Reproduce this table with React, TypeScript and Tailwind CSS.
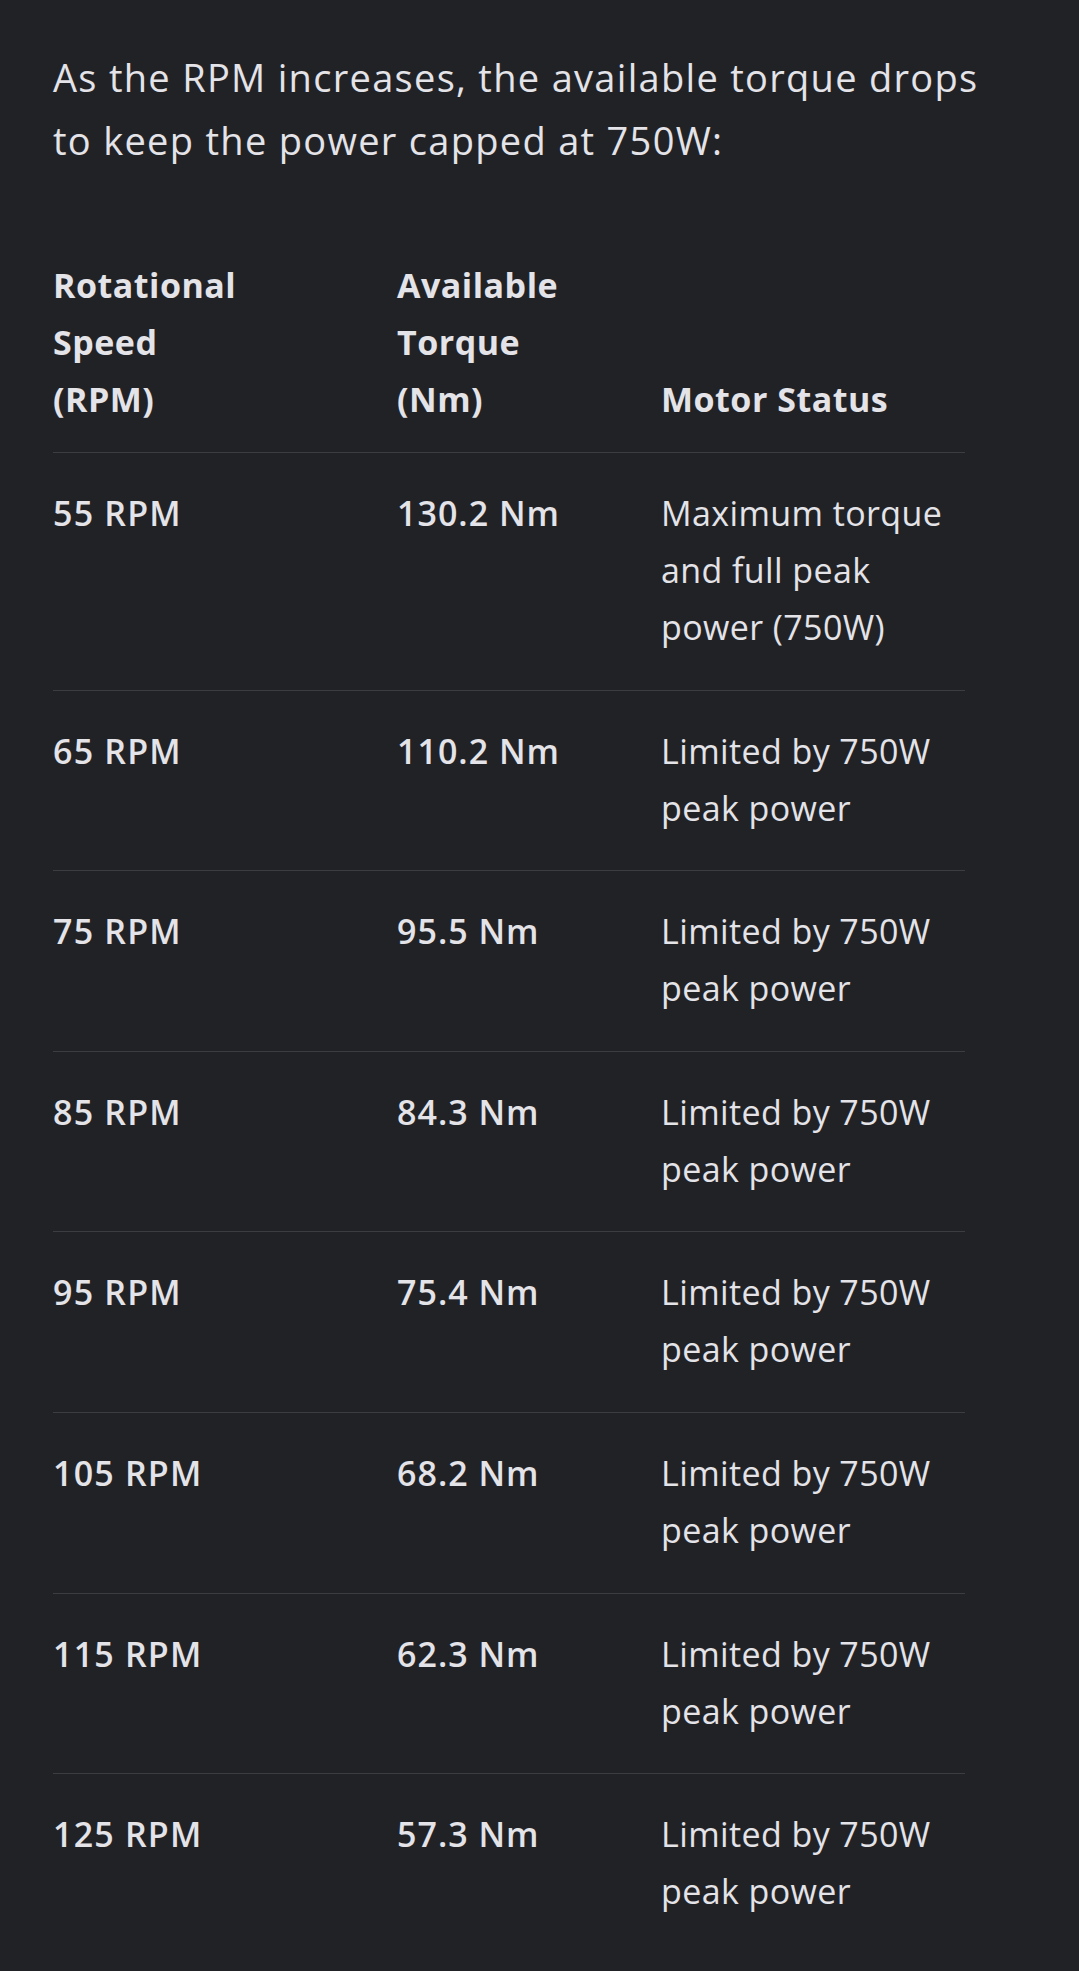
import React from "react";

const rows: { rpm: string; torque: string; status: string[] }[] = [
  { rpm: "55 RPM", torque: "130.2 Nm", status: ["Maximum torque", "and full peak", "power (750W)"] },
  { rpm: "65 RPM", torque: "110.2 Nm", status: ["Limited by 750W", "peak power"] },
  { rpm: "75 RPM", torque: "95.5 Nm", status: ["Limited by 750W", "peak power"] },
  { rpm: "85 RPM", torque: "84.3 Nm", status: ["Limited by 750W", "peak power"] },
  { rpm: "95 RPM", torque: "75.4 Nm", status: ["Limited by 750W", "peak power"] },
  { rpm: "105 RPM", torque: "68.2 Nm", status: ["Limited by 750W", "peak power"] },
  { rpm: "115 RPM", torque: "62.3 Nm", status: ["Limited by 750W", "peak power"] },
  { rpm: "125 RPM", torque: "57.3 Nm", status: ["Limited by 750W", "peak power"] },
];

function Lines({ lines }: { lines: string[] }) {
  return (
    <>
      {lines.map((l, i) => (
        <div key={i} className="whitespace-nowrap">
          {l}
        </div>
      ))}
    </>
  );
}

export default function App() {
  return (
    <div
      className="min-h-[1971px] w-full bg-[#212226] text-[#e3e3e8] pt-[46px] pl-[53px] pr-[40px]"
      style={{ fontFamily: "'Open Sans', Roboto, Arial, sans-serif" }}
    >
      <p className="text-[38px] leading-[63px] tracking-[1.3px]">
        As the RPM increases, the available torque drops
        <br />
        to keep the power capped at 750W:
      </p>

      <div className="mt-[85px] w-[912px]">
        <div className="grid grid-cols-[344px_264px_304px] items-end border-b border-[#3c3d42] pb-[24px] text-[34px] leading-[57px] font-bold tracking-[0.5px]">
          <div>
            <Lines lines={["Rotational", "Speed", "(RPM)"]} />
          </div>
          <div>
            <Lines lines={["Available", "Torque", "(Nm)"]} />
          </div>
          <div>
            <Lines lines={["Motor Status"]} />
          </div>
        </div>

        {rows.map((r, i) => (
          <div
            key={i}
            className={
              "grid grid-cols-[344px_264px_304px] items-start pt-[32px] pb-[33.6px] text-[34px] leading-[57px] " +
              (i < rows.length - 1 ? "border-b border-[#3c3d42]" : "")
            }
          >
            <div className="font-semibold tracking-[1.2px]">{r.rpm}</div>
            <div className="font-semibold tracking-[1px]">{r.torque}</div>
            <div className="font-normal tracking-[0.4px]">
              <Lines lines={r.status} />
            </div>
          </div>
        ))}
      </div>
    </div>
  );
}
